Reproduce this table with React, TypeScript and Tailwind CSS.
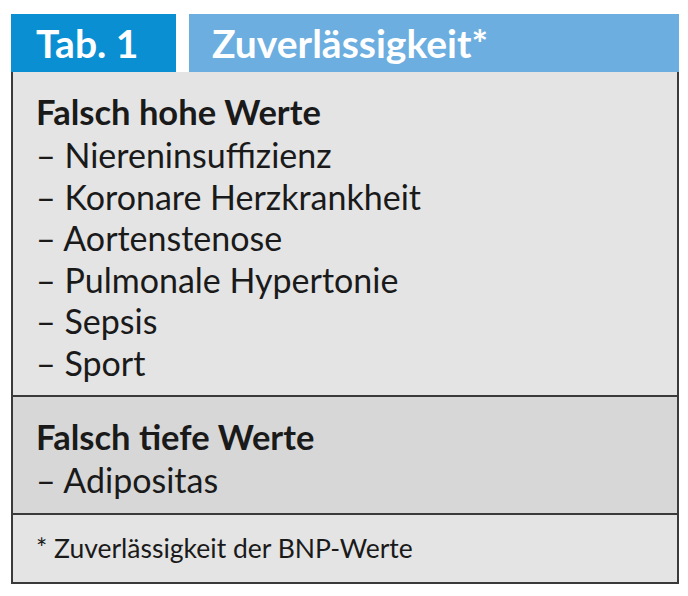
import type React from "react"

// Section block with a bold heading and dash list
const Section = ({ title, items, className = "" }: { title: string; items: string[]; className?: string }) => (
    <div className={`px-[23px] ${className}`}>
        <h2 className="font-bold text-[34.5px] leading-[44px] text-[#1a1a1a]">{title}</h2>
        <ul className="text-[34px] leading-[41.6px] text-[#1a1a1a]">
            {items.map((item) => (
                <li key={item}>– {item}</li>
            ))}
        </ul>
    </div>
)

export default function App() {
    const high = [
        "Niereninsuffizienz",
        "Koronare Herzkrankheit",
        "Aortenstenose",
        "Pulmonale Hypertonie",
        "Sepsis",
        "Sport",
    ]

    return (
        <div className="w-[688px] h-[596px] bg-white pt-[14px] pl-[11px]" style={{ fontFamily: "Lato, 'Open Sans', sans-serif" }}>
            <div className="w-[668px]">
                {/* Header */}
                <div className="flex gap-[13px] h-[58px]">
                    <div className="w-[165px] bg-[#0a8fd3] flex items-center pl-[25px]">
                        <span className="text-white font-bold text-[39px] leading-none">Tab. 1</span>
                    </div>
                    <div className="flex-1 bg-[#6caee0] flex items-center pl-[23px]">
                        <span className="text-white font-bold text-[39px] leading-none">Zuverlässigkeit*</span>
                    </div>
                </div>

                {/* Body */}
                <div className="border-2 border-t-0 border-[#3a3a3a]">
                    <Section title="Falsch hohe Werte" items={high} className="bg-[#e4e4e4] pt-[18px] h-[323px]" />
                    <div className="border-t-2 border-[#3a3a3a]">
                        <Section title="Falsch tiefe Werte" items={["Adipositas"]} className="bg-[#d7d7d7] pt-[18px] h-[116px]" />
                    </div>
                    <div className="border-t-2 border-[#3a3a3a] bg-[#e4e4e4] h-[69px] flex items-center px-[23px]">
                        <span className="text-[26.5px] leading-none text-[#1a1a1a]">* Zuverlässigkeit der BNP-Werte</span>
                    </div>
                </div>
            </div>
        </div>
    )
}
